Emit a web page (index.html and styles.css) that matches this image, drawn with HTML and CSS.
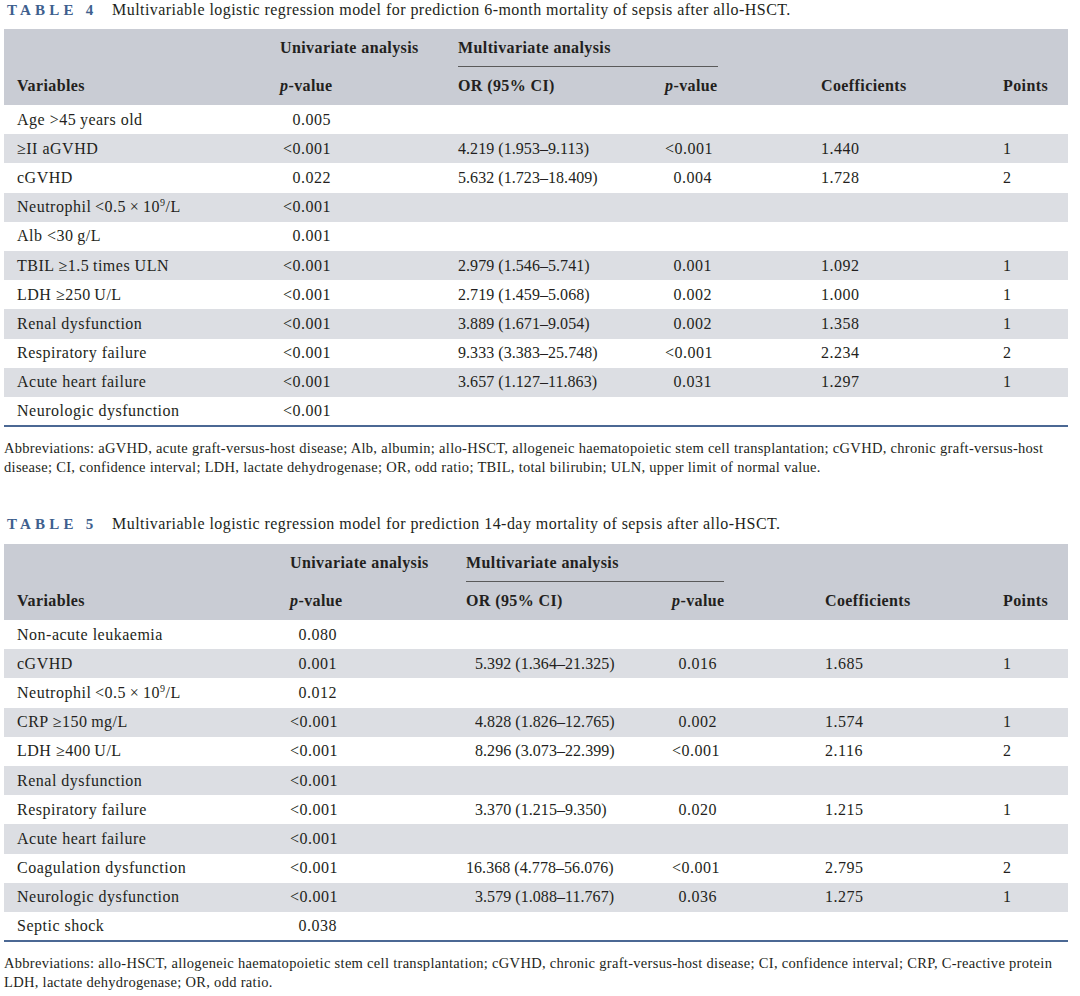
FILE: index.html
```html
<!DOCTYPE html>
<html>
<head>
<meta charset="utf-8">
<link rel="stylesheet" href="styles.css">
</head>
<body>
<div class="page">
  <section class="block t4">
    <div class="caption"><span class="label">TABLE 4</span><span class="ctext">Multivariable logistic regression model for prediction 6-month mortality of sepsis after allo-HSCT.</span></div>
    <table class="tbl">
      <colgroup><col class="c1"><col class="c2"><col class="c3"><col class="c4"><col class="c5"><col class="c6"></colgroup>
      <thead>
        <tr class="h1"><th></th><th>Univariate analysis</th><th colspan="2"><div class="multi">Multivariate analysis</div></th><th></th><th></th></tr>
        <tr class="h2"><th class="first">Variables</th><th><i>p</i>-value</th><th>OR (95% CI)</th><th><i>p</i>-value</th><th>Coefficients</th><th>Points</th></tr>
      </thead>
      <tbody>
        <tr><td class="first">Age &gt;45&#8201;years old</td><td><span class="pv">0.005</span></td><td></td><td></td><td></td><td></td></tr>
        <tr><td class="first">≥II aGVHD</td><td><span class="pv">&lt;0.001</span></td><td class="or">4.219 (1.953–9.113)</td><td><span class="pv2">&lt;0.001</span></td><td>1.440</td><td class="pts">1</td></tr>
        <tr><td class="first">cGVHD</td><td><span class="pv">0.022</span></td><td class="or">5.632 (1.723–18.409)</td><td><span class="pv2">0.004</span></td><td>1.728</td><td class="pts">2</td></tr>
        <tr><td class="first">Neutrophil&#8201;&lt;0.5&#8201;×&#8201;10<sup>9</sup>/L</td><td><span class="pv">&lt;0.001</span></td><td></td><td></td><td></td><td></td></tr>
        <tr><td class="first">Alb &lt;30&#8201;g/L</td><td><span class="pv">0.001</span></td><td></td><td></td><td></td><td></td></tr>
        <tr><td class="first">TBIL ≥1.5&#8201;times ULN</td><td><span class="pv">&lt;0.001</span></td><td class="or">2.979 (1.546–5.741)</td><td><span class="pv2">0.001</span></td><td>1.092</td><td class="pts">1</td></tr>
        <tr><td class="first">LDH ≥250&#8201;U/L</td><td><span class="pv">&lt;0.001</span></td><td class="or">2.719 (1.459–5.068)</td><td><span class="pv2">0.002</span></td><td>1.000</td><td class="pts">1</td></tr>
        <tr><td class="first">Renal dysfunction</td><td><span class="pv">&lt;0.001</span></td><td class="or">3.889 (1.671–9.054)</td><td><span class="pv2">0.002</span></td><td>1.358</td><td class="pts">1</td></tr>
        <tr><td class="first">Respiratory failure</td><td><span class="pv">&lt;0.001</span></td><td class="or">9.333 (3.383–25.748)</td><td><span class="pv2">&lt;0.001</span></td><td>2.234</td><td class="pts">2</td></tr>
        <tr><td class="first">Acute heart failure</td><td><span class="pv">&lt;0.001</span></td><td class="or">3.657 (1.127–11.863)</td><td><span class="pv2">0.031</span></td><td>1.297</td><td class="pts">1</td></tr>
        <tr><td class="first">Neurologic dysfunction</td><td><span class="pv">&lt;0.001</span></td><td></td><td></td><td></td><td></td></tr>
      </tbody>
    </table>
    <p class="abbr">Abbreviations: aGVHD, acute graft-versus-host disease; Alb, albumin; allo-HSCT, allogeneic haematopoietic stem cell transplantation; cGVHD, chronic graft-versus-host disease; CI, confidence interval; LDH, lactate dehydrogenase; OR, odd ratio; TBIL, total bilirubin; ULN, upper limit of normal value.</p>
  </section>

  <section class="block t5">
    <div class="caption"><span class="label">TABLE 5</span><span class="ctext">Multivariable logistic regression model for prediction 14-day mortality of sepsis after allo-HSCT.</span></div>
    <table class="tbl">
      <colgroup><col class="c1"><col class="c2"><col class="c3"><col class="c4"><col class="c5"><col class="c6"></colgroup>
      <thead>
        <tr class="h1"><th></th><th>Univariate analysis</th><th colspan="2"><div class="multi">Multivariate analysis</div></th><th></th><th></th></tr>
        <tr class="h2"><th class="first">Variables</th><th><i>p</i>-value</th><th>OR (95% CI)</th><th><i>p</i>-value</th><th>Coefficients</th><th>Points</th></tr>
      </thead>
      <tbody>
        <tr><td class="first">Non-acute leukaemia</td><td><span class="pv">0.080</span></td><td></td><td></td><td></td><td></td></tr>
        <tr><td class="first">cGVHD</td><td><span class="pv">0.001</span></td><td class="or ind">5.392 (1.364–21.325)</td><td><span class="pv2">0.016</span></td><td>1.685</td><td class="pts">1</td></tr>
        <tr><td class="first">Neutrophil&#8201;&lt;0.5&#8201;×&#8201;10<sup>9</sup>/L</td><td><span class="pv">0.012</span></td><td></td><td></td><td></td><td></td></tr>
        <tr><td class="first">CRP ≥150&#8201;mg/L</td><td><span class="pv">&lt;0.001</span></td><td class="or ind">4.828 (1.826–12.765)</td><td><span class="pv2">0.002</span></td><td>1.574</td><td class="pts">1</td></tr>
        <tr><td class="first">LDH ≥400&#8201;U/L</td><td><span class="pv">&lt;0.001</span></td><td class="or ind">8.296 (3.073–22.399)</td><td><span class="pv2">&lt;0.001</span></td><td>2.116</td><td class="pts">2</td></tr>
        <tr><td class="first">Renal dysfunction</td><td><span class="pv">&lt;0.001</span></td><td></td><td></td><td></td><td></td></tr>
        <tr><td class="first">Respiratory failure</td><td><span class="pv">&lt;0.001</span></td><td class="or ind">3.370 (1.215–9.350)</td><td><span class="pv2">0.020</span></td><td>1.215</td><td class="pts">1</td></tr>
        <tr><td class="first">Acute heart failure</td><td><span class="pv">&lt;0.001</span></td><td></td><td></td><td></td><td></td></tr>
        <tr><td class="first">Coagulation dysfunction</td><td><span class="pv">&lt;0.001</span></td><td class="or">16.368 (4.778–56.076)</td><td><span class="pv2">&lt;0.001</span></td><td>2.795</td><td class="pts">2</td></tr>
        <tr><td class="first">Neurologic dysfunction</td><td><span class="pv">&lt;0.001</span></td><td class="or ind">3.579 (1.088–11.767)</td><td><span class="pv2">0.036</span></td><td>1.275</td><td class="pts">1</td></tr>
        <tr><td class="first">Septic shock</td><td><span class="pv">0.038</span></td><td></td><td></td><td></td><td></td></tr>
      </tbody>
    </table>
    <p class="abbr">Abbreviations: allo-HSCT, allogeneic haematopoietic stem cell transplantation; cGVHD, chronic graft-versus-host disease; CI, confidence interval; CRP, C-reactive protein<br>LDH, lactate dehydrogenase; OR, odd ratio.</p>
  </section>
</div>
</body>
</html>
```

FILE: styles.css
```css
html, body {
  margin: 0;
  padding: 0;
  background: #ffffff;
}
body {
  font-family: "Liberation Serif", "Times New Roman", serif;
  color: #231f20;
}
.page {
  width: 1064px;
  padding-left: 4px;
}
.block {
  display: flex;
  flex-direction: column;
}
.t5 {
  margin-top: 37px;
}
.caption {
  display: flex;
  align-items: baseline;
  height: 20px;
  line-height: 20px;
  margin-bottom: 9px;
  padding-left: 3px;
  font-size: 16px;
  letter-spacing: 0.45px;
}
.t5 .caption {
  margin-bottom: 10px;
}
.label {
  font-weight: bold;
  font-size: 15px;
  letter-spacing: 4.2px;
  color: #3e5f8e;
  width: 105px;
  flex: none;
}
.ctext {
  color: #231f20;
}
.tbl {
  width: 1064px;
  table-layout: fixed;
  border-collapse: collapse;
  border-bottom: 2px solid #4b6894;
  font-size: 16px;
  letter-spacing: 0.5px;
}
.tbl th, .tbl td {
  padding: 0;
  text-align: left;
  white-space: nowrap;
}
.tbl thead tr {
  background: #c9ccd4;
}
.tbl th {
  font-weight: bold;
  letter-spacing: 0.4px;
  height: 38px;
  vertical-align: middle;
}
.tbl th i {
  font-style: italic;
}
.multi {
  width: 260px;
  height: 37px;
  line-height: 38px;
  border-bottom: 1px solid #5a5a5a;
}
.tbl tbody tr {
  height: 29.2px;
}
.tbl tbody tr:nth-child(even) {
  background: #dcdee3;
}
.tbl td {
  vertical-align: middle;
}
.tbl .first {
  padding-left: 13px;
}
.tbl .or {
  letter-spacing: 0.05px;
}
.pv {
  display: inline-block;
  width: 51px;
  text-align: right;
}
.pv2 {
  display: inline-block;
  width: 47px;
  text-align: right;
}
.pts {
  padding-left: 2px;
}
sup {
  font-size: 10px;
  line-height: 0;
  vertical-align: 6px;
}
.t4 .c1 { width: 276px; }
.t4 .c2 { width: 178px; }
.t4 .c3 { width: 207px; }
.t4 .c4 { width: 156px; }
.t4 .c5 { width: 182px; }
.t4 .c6 { width: 65px; }
.t5 .c1 { width: 286px; }
.t5 .c2 { width: 176px; }
.t5 .c3 { width: 206px; }
.t5 .c4 { width: 153px; }
.t5 .c5 { width: 178px; }
.t5 .c6 { width: 65px; }
.t5 .multi { width: 258px; }
.t5 .pv { width: 47px; }
.t5 .pv2 { width: 45px; }
.t5 .ind {
  padding-left: 9px;
}
.abbr {
  margin: 12px 0 0 0;
  font-size: 14.5px;
  letter-spacing: 0.3px;
  line-height: 19px;
  color: #231f20;
}
```
